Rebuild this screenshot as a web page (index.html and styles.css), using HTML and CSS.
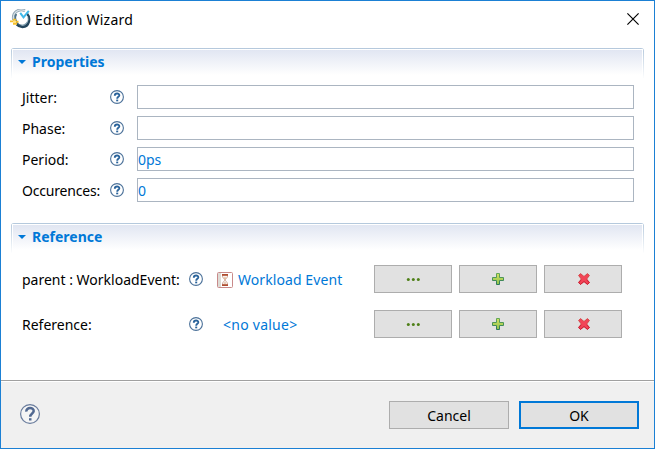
FILE: index.html
```html
<!DOCTYPE html>
<html lang="en">
<head>
<meta charset="utf-8">
<title>Edition Wizard</title>
<link rel="stylesheet" href="styles.css">
</head>
<body>
<svg class="defs" aria-hidden="true">
  <defs>
    <linearGradient id="green" x1="0" y1="0" x2="0" y2="1"><stop offset="0" stop-color="#d5df62"/><stop offset="1" stop-color="#8bc34b"/></linearGradient>
    <linearGradient id="greenEdge" x1="0" y1="0" x2="0" y2="1"><stop offset="0" stop-color="#63a957"/><stop offset="1" stop-color="#2b775c"/></linearGradient>
  </defs>
  <symbol id="help" viewBox="0 0 14 14"><circle cx="7" cy="7" r="6.4" fill="#fff" stroke="#4b7199" stroke-width="1.1"/><path d="M4.8 5.7C4.8 2.8 9.5 2.9 9.3 5.4C9.1 6.8 7.2 6.8 7.2 8.7" fill="none" stroke="#2a639b" stroke-width="1.9"/><path d="M6.2 9.6h2v1.7h-2z" fill="#2a639b"/></symbol>
  <symbol id="dots" viewBox="0 0 14 12"><g fill="#4f8019"><circle cx="2.3" cy="6.5" r="1.5"/><circle cx="7.3" cy="6.5" r="1.5"/><circle cx="12.3" cy="6.5" r="1.5"/></g></symbol>
  <symbol id="plus" viewBox="0 0 12 12"><path d="M4.5.5h3v4h4v3h-4v4h-3v-4h-4v-3h4z" fill="url(#green)" stroke="url(#greenEdge)"/></symbol>
  <symbol id="cross" viewBox="0 0 12 12"><path d="M2.5.6L6 3.5L9.5.6L11.4 2.5L8.7 6L11.4 9.5L9.5 11.4L6 8.5L2.5 11.4L.6 9.5L3.3 6L.6 2.5z" fill="#f34457" stroke="#d44b4a"/><path d="M.6 9.5L3.3 7M8.7 7l2.7 2.5-1.9 1.9L6 8.5l-3.5 2.9L.6 9.5" fill="none" stroke="#cf1d36"/></symbol>
</svg>
<main class="window">
  <header class="titlebar">
    <svg class="logo" viewBox="0 0 21 21">
      <path d="M15 1.6C8 -1 2 4 3.6 11" fill="none" stroke="#8fa3b1" stroke-width="2.8"/>
      <path d="M15 1.6C8 -1 2 4 3.6 11" fill="none" stroke="#d8e2e8" stroke-width="1.2"/>
      <path d="M6.3 5C4.5 8 5 12.5 8.5 15.5C12 18 16.5 16.5 18 12.5" fill="none" stroke="#4f7288" stroke-width="1.8"/>
      <path d="M17 4.5C21 9 19.5 17.8 12.5 18C10 18 8 17 6.7 15.5" fill="none" stroke="#24465d" stroke-width="2.3"/>
      <path d="M17.3 7C19.5 12 16 16.7 11.5 16.3" fill="none" stroke="#a6bfcc" stroke-width=".9"/>
      <path d="M10.2 3.8l3.3 4.5 5.3-6.5" fill="none" stroke="#3fb8ea" stroke-width="2"/>
      <path d="M3 9.7h3v2H3zM0 11.5h4v1.8H0zM3 14h4v1.8H3zM6 11.8h2.5v2H6z" fill="#f6c02b"/>
      <path d="M3 11.7h3v2.3H3z" fill="#ffe080"/>
    </svg>
    <h1 class="title">Edition Wizard</h1>
    <svg class="close" viewBox="0 0 12 12"><path d="M.4.4l11.2 11.2M11.6.4L.4 11.6" stroke="#000" stroke-width="1.15"/></svg>
  </header>
  <section class="section properties">
    <div class="section-head"><svg class="twistie" viewBox="0 0 8 4"><path d="M0 0h8L4 4z"/></svg><h2 class="heading">Properties</h2></div>
    <div class="fields">
      <label class="field"><span class="label">Jitter:</span><svg class="help"><use href="#help"/></svg><span class="input"></span></label>
      <label class="field"><span class="label">Phase:</span><svg class="help"><use href="#help"/></svg><span class="input"></span></label>
      <label class="field"><span class="label">Period:</span><svg class="help"><use href="#help"/></svg><span class="input">0ps</span></label>
      <label class="field"><span class="label tight">Occurences:</span><svg class="help"><use href="#help"/></svg><span class="input">0</span></label>
    </div>
  </section>
  <section class="section references">
    <div class="section-head"><svg class="twistie" viewBox="0 0 8 4"><path d="M0 0h8L4 4z"/></svg><h2 class="heading">Reference</h2></div>
    <div class="links">
      <div class="link-row">
        <span class="label">parent : WorkloadEvent:</span><svg class="help"><use href="#help"/></svg>
        <span class="link">
          <svg class="event" viewBox="0 0 16 16"><rect x=".5" y=".5" width="15" height="15" rx="1" fill="#fff" stroke="#c98a8a"/><path d="M1 1h3v14H1z" fill="#dedbd5"/><path d="M5.5 3v2L8 8l-2.5 3v2h5v-2L8 8l2.5-3V3z" fill="#f7f2ef" stroke="#c89584" stroke-width=".7"/><path d="M5 2h6v1.8H5zM5 12.2h6V14H5z" fill="#b04d30"/><path d="M6.5 5.5h3L8 7.5zM6.5 11.5L8 10l1.5 1.5z" fill="#e0b08a"/></svg>
          <span>Workload Event</span></span>
        <span class="tool"><svg class="dots"><use href="#dots"/></svg></span>
        <span class="tool"><svg class="glyph"><use href="#plus"/></svg></span>
        <span class="tool"><svg class="glyph cross"><use href="#cross"/></svg></span>
      </div>
      <div class="link-row">
        <span class="label">Reference:</span><svg class="help"><use href="#help"/></svg>
        <span class="link empty">&lt;no value&gt;</span>
        <span class="tool"><svg class="dots"><use href="#dots"/></svg></span>
        <span class="tool"><svg class="glyph"><use href="#plus"/></svg></span>
        <span class="tool"><svg class="glyph cross"><use href="#cross"/></svg></span>
      </div>
    </div>
  </section>
  <footer class="footer">
    <svg class="footer-help" viewBox="0 0 20 20"><circle cx="10" cy="10" r="9.4" fill="#f5f5f5" stroke="#687b9c" stroke-width="1.2"/><path d="M6.3 7.6C6.1 2.9 13.9 2.9 13.7 7.2C13.5 9.5 10.2 9.5 10.2 12.8" fill="none" stroke="#526991" stroke-width="2.5"/><path d="M9 14.2h2.5v2.3H9z" fill="#526991"/></svg>
    <span class="button">Cancel</span>
    <span class="button primary">OK</span>
  </footer>
</main>
</body>
</html>
```
FILE: styles.css
```css
* { box-sizing: border-box; }
body { margin: 0; font: 14px/20px "Noto Sans", "Open Sans", sans-serif; color: #000; }
svg { display: block; flex: none; }
.defs { position: absolute; width: 0; height: 0; }
.window { width: 655px; height: 449px; border: 1px solid #1b80d4; background: #fff; display: flex; flex-direction: column; }
.titlebar { height: 47px; display: flex; align-items: flex-start; padding: 8px 15px 0 9px; }
.logo { width: 21px; height: 21px; }
.title { margin: 1px auto 0 4px; font-size: 14px; font-weight: 400; letter-spacing: .25px; white-space: nowrap; }
.close { width: 12px; height: 12px; margin-top: 4px; }
.section { margin: 0 10px; }
.properties { height: 175px; }
.references { flex: 1; }
.section-head { height: 30px; display: flex; align-items: center; padding: 0 0 3px 6px; border: 1px solid; border-bottom: 0; border-image: linear-gradient(#b4c8dc, #fff) 1; background: linear-gradient(#e1e6f2, #fff) 1px 1px / calc(100% - 2px) 25px no-repeat; clip-path: inset(0 round 3px 3px 0 0); }
.twistie { width: 8px; height: 4px; fill: #0078d7; }
.heading { margin: 0 0 0 6px; font-size: 14px; line-height: 20px; color: #0078d7; white-space: nowrap; }
.fields { display: grid; gap: 7px; padding: 7px 9px 0 11px; }
.field { display: grid; grid-template-columns: 88px 27px 497px; align-items: center; height: 24px; }
.label { padding-top: 1px; white-space: nowrap; }
.label.tight { letter-spacing: -.2px; }
.help { width: 14px; height: 14px; }
.input { height: 24px; border: 1px solid #abb5c1; color: #0078d7; line-height: 23px; }
.links { display: grid; gap: 17px; padding: 12px 0 0 11px; }
.link-row { display: grid; grid-template-columns: 167px 14px 171px 85px 85px 78px; height: 28px; align-items: center; }
.link { display: flex; align-items: center; gap: 5px; padding: 1px 0 0 14px; color: #0078d7; letter-spacing: .08px; white-space: nowrap; }
.link.empty { padding-left: 20px; letter-spacing: .25px; }
.event { width: 16px; height: 16px; }
.tool { width: 78px; height: 28px; display: flex; align-items: center; justify-content: center; background: #e1e1e1; border: 1px solid #adadad; }
.dots { width: 14px; height: 12px; }
.glyph { width: 12px; height: 12px; }
.glyph.cross { margin-left: 2px; }
.footer { height: 68px; flex: none; border-top: 1px solid #a0a0a0; box-shadow: inset 0 1px #fff; background: #f0f0f0; display: flex; align-items: flex-start; gap: 10px; padding: 20px 15px 0 19px; }
.footer-help { width: 20px; height: 20px; margin: 3px auto 0 0; }
.button { width: 120px; height: 28px; border: 1px solid #adadad; background: #e1e1e1; text-align: center; line-height: 27px; }
.button.primary { border: 2px solid #0078d7; line-height: 25px; }
```
